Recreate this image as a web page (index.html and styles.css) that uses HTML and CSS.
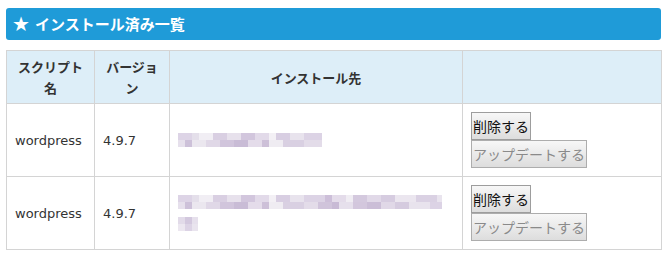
FILE: index.html
```html
<!DOCTYPE html>
<html lang="ja">
<head>
  <meta charset="UTF-8">
  <meta name="viewport" content="width=device-width, initial-scale=1.0">
  <title>インストール済み一覧</title>
  <link rel="stylesheet" href="styles.css">
</head>
<body>
  <div class="wrap">
    <h2 class="title"><span class="star">★</span>インストール済み一覧</h2>

    <table class="list">
      <colgroup>
        <col class="c-name">
        <col class="c-ver">
        <col class="c-path">
        <col class="c-act">
      </colgroup>
      <thead>
        <tr>
          <th>スクリプト名</th>
          <th>バージョン</th>
          <th>インストール先</th>
          <th></th>
        </tr>
      </thead>
      <tbody>
        <tr>
          <td>wordpress</td>
          <td>4.9.7</td>
          <td><span class="blur blur-short"></span></td>
          <td>
            <button type="button" class="btn">削除する</button>
            <button type="button" class="btn" disabled>アップデートする</button>
          </td>
        </tr>
        <tr>
          <td>wordpress</td>
          <td>4.9.7</td>
          <td><span class="blur blur-long"></span><span class="blur blur-tail"></span></td>
          <td>
            <button type="button" class="btn">削除する</button>
            <button type="button" class="btn" disabled>アップデートする</button>
          </td>
        </tr>
      </tbody>
    </table>
  </div>
</body>
</html>
```

FILE: styles.css
```css
body {
  margin: 0;
  font-family: "DejaVu Sans", "Noto Sans CJK JP", sans-serif;
  color: #333;
  background: #fff;
}
.wrap {
  padding: 8px 6px;
  width: 655px;
}
.title {
  margin: 0 0 10px;
  height: 32px;
  line-height: 32px;
  padding: 0 6px;
  background-color: #1f9bd8;
  border-radius: 3px;
  color: #fff;
  font-family: "Noto Sans CJK JP", sans-serif;
  font-size: 15px;
  font-weight: bold;
}
.star {
  display: inline-block;
  vertical-align: top;
  font-family: "DejaVu Sans", sans-serif;
  font-size: 20px;
  margin-right: 5px;
}
.list {
  width: 655px;
  border-collapse: collapse;
  table-layout: fixed;
  font-size: 13px;
}
.c-name { width: 88px; }
.c-ver { width: 75px; }
.c-path { width: 293px; }
.c-act { width: 199px; }
.list th,
.list td {
  border: 1px solid #d4d4d4;
  padding: 8px;
  vertical-align: middle;
}
.list th {
  background-color: #ddeef8;
  padding: 5px 8px;
  line-height: 21px;
  font-family: "Noto Sans CJK JP", sans-serif;
  font-weight: bold;
  text-align: center;
}
.list td {
  text-align: left;
}
.btn {
  display: block;
  margin: 0;
  padding: 2px 1px;
  height: 28px;
  line-height: 22px;
  font-family: "Noto Sans CJK JP", sans-serif;
  font-size: 14px;
  color: #111;
  background: linear-gradient(#f7f7f7, #dddddd);
  border: 1px solid #9d9d9d;
  border-radius: 0;
}
.btn:disabled {
  color: #8a8a8a;
  border-color: #adadad;
}
.blur {
  display: block;
  height: 14px;
  background-size: 100% 7px, 100% 7px;
  background-position: 0 0, 0 7px;
  background-repeat: no-repeat;
}
.blur-short {
  width: 144px;
  background-image:
    linear-gradient(90deg, #ddd4e6 0 14px, #e4dfea 14px 21px, #f1eef4 21px 35px, #d9cfe2 35px 49px, #e7e1ec 49px 63px, #d2c6dd 63px 77px, #e2dae9 77px 91px, #f3f0f5 91px 98px, #d8cee2 98px 112px, #e8e3ed 112px 126px, #dcd3e5 126px 144px),
    linear-gradient(90deg, #e6e0ec 0 7px, #cdc1d9 7px 14px, #ebe7ef 14px 28px, #e0d8e7 28px 42px, #d1c5dc 42px 56px, #c9bcd6 56px 70px, #e4dcea 70px 84px, #cdc0d8 84px 91px, #efecf2 91px 105px, #d9d0e2 105px 126px, #e3dce9 126px 144px);
}
.blur-long {
  width: 264px;
  background-image:
    linear-gradient(90deg, #ddd4e6 0 14px, #e4dfea 14px 21px, #f1eef4 21px 35px, #d9cfe2 35px 49px, #e7e1ec 49px 63px, #d2c6dd 63px 77px, #e2dae9 77px 91px, #f3f0f5 91px 98px, #d8cee2 98px 112px, #e8e3ed 112px 126px, #dcd3e5 126px 147px, #cdbfd9 147px 154px, #e4dcea 154px 168px, #f0edf3 168px 175px, #d4c9de 175px 189px, #e1d9e8 189px 203px, #d6cce0 203px 217px, #ebe6ef 217px 238px, #dad1e3 238px 259px, #e9e4ee 259px 264px),
    linear-gradient(90deg, #e6e0ec 0 7px, #cdc1d9 7px 14px, #ebe7ef 14px 28px, #e0d8e7 28px 42px, #d1c5dc 42px 56px, #c9bcd6 56px 70px, #e4dcea 70px 84px, #cdc0d8 84px 91px, #efecf2 91px 105px, #d9d0e2 105px 126px, #e3dce9 126px 140px, #d0c4db 140px 154px, #c8bad5 154px 161px, #e6e0ec 161px 175px, #d3c7dd 175px 189px, #cbbed7 189px 203px, #e0d8e7 203px 217px, #d5cbdf 217px 231px, #e8e3ed 231px 252px, #dcd3e5 252px 264px);
}
.blur-tail {
  width: 20px;
  margin-top: 8px;
  background-image:
    linear-gradient(90deg, #e2dbe9 0 7px, #d3c8de 7px 14px, #e6e0ec 14px 20px),
    linear-gradient(90deg, #ece7f0 0 7px, #dcd3e5 7px 14px, #e9e4ee 14px 20px);
}
```
